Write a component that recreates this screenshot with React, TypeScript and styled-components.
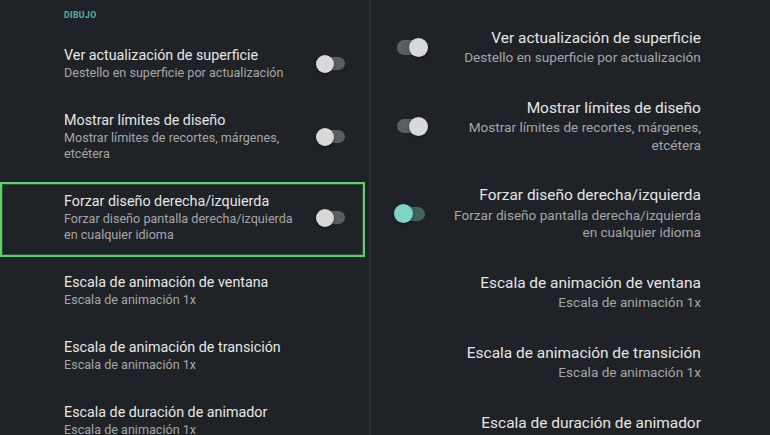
import styled, { createGlobalStyle, css } from "styled-components";

// every size of a list scales with its --k
const u = (px: number) => `calc(${px}px * var(--k))`;

const GlobalStyle = createGlobalStyle`
  html, body {
    margin: 0;
    background: #1f2226;
  }
  body {
    font-family: Roboto, "Noto Sans", "Liberation Sans", sans-serif;
    -webkit-font-smoothing: antialiased;
  }
`;

const Screen = styled.div`
  display: flex;
  width: 770px;
  height: 435px;
  overflow: hidden;
  background: #1f2226;
`;

const Panel = styled.section<{ $rtl?: boolean; $scale: number }>`
  --k: ${(p) => p.$scale};
  display: flex;
  flex-direction: column;
  width: ${(p) => (p.$rtl ? "auto" : "369px")};
  flex: ${(p) => (p.$rtl ? 1 : "none")};
  text-align: ${(p) => (p.$rtl ? "right" : "left")};
  overflow: hidden;
`;

const Divider = styled.div`
  width: 2px;
  flex: none;
  background: #292c30;
`;

const SectionLabel = styled.div<{ $rtl?: boolean }>`
  height: ${u(30)};
  line-height: ${u(30)};
  padding: 0 ${u(64)};
  margin-top: ${(p) => (p.$rtl ? u(-19.5) : "0")};
  color: #5cb3a4;
  font-size: ${u(8.6)};
  font-weight: 700;
  letter-spacing: 0.05em;
`;

const Row = styled.div<{ $rtl?: boolean; $highlight?: boolean }>`
  display: flex;
  flex-direction: ${(p) => (p.$rtl ? "row-reverse" : "row")};
  align-items: center;
  gap: ${u(12)};
  padding: ${u(16)} ${u(17)} ${u(14)} ${u(64)};
  margin-right: ${u(4)};

  ${(p) =>
    p.$rtl &&
    css`
      padding: ${u(16)} ${u(64)} ${u(14)} ${u(17)};
      margin-right: 0;
      margin-left: ${u(4)};
    `}

  ${(p) =>
    p.$highlight &&
    css`
      margin-top: ${u(6)};
      border: 2px solid #5ed06b;
      box-shadow: inset 0 0 0 1px rgba(120, 230, 130, 0.2);
      padding: ${u(8)} calc(${u(17)} - 2px) ${u(12)} calc(${u(64)} - 2px);
    `}
`;

const Texts = styled.div`
  flex: 1;
  min-width: 0;
`;

const Title = styled.div`
  color: #e6e6e6;
  font-size: ${u(14.3)};
  line-height: ${u(18)};
`;

const Summary = styled.div`
  margin-top: ${u(1)};
  color: #a5a6a8;
  font-size: ${u(12.6)};
  line-height: ${u(16)};
`;

// track 26 wide, thumb overhangs it by 3 at either end
const Switch = styled.div<{ $on?: boolean; $rtl?: boolean }>`
  position: relative;
  flex: none;
  width: ${u(32)};
  height: ${u(18)};

  &::before {
    content: "";
    position: absolute;
    top: ${u(2.5)};
    left: ${u(3)};
    width: ${u(26)};
    height: ${u(13)};
    border-radius: ${u(6.5)};
    background: ${(p) => (p.$on ? "#44615c" : "#5c5f62")};
  }

  &::after {
    content: "";
    position: absolute;
    top: 0;
    ${(p) => {
      const thumbAtRight = p.$rtl ? !p.$on : p.$on;
      return thumbAtRight ? "right: 0;" : "left: 0;";
    }}
    width: ${u(18)};
    height: ${u(18)};
    border-radius: 50%;
    background: ${(p) => (p.$on ? "#7dd6c3" : "#d8d8d8")};
    box-shadow: 0 1px 3px rgba(0, 0, 0, 0.45);
  }
`;

type Item = {
  title: string;
  summary: string;
  toggle?: boolean;
  highlight?: boolean;
};

const items: Item[] = [
  {
    title: "Ver actualización de superficie",
    summary: "Destello en superficie por actualización",
    toggle: true,
  },
  {
    title: "Mostrar límites de diseño",
    summary: "Mostrar límites de recortes, márgenes, etcétera",
    toggle: true,
  },
  {
    title: "Forzar diseño derecha/izquierda",
    summary: "Forzar diseño pantalla derecha/izquierda en cualquier idioma",
    toggle: true,
    highlight: true,
  },
  { title: "Escala de animación de ventana", summary: "Escala de animación 1x" },
  { title: "Escala de animación de transición", summary: "Escala de animación 1x" },
  { title: "Escala de duración de animador", summary: "Escala de animación 1x" },
];

function SettingsList({ rtl, scale }: { rtl?: boolean; scale: number }) {
  return (
    <Panel $rtl={rtl} $scale={scale}>
      <SectionLabel $rtl={rtl}>DIBUJO</SectionLabel>
      {items.map((item) => (
        <Row key={item.title} $rtl={rtl} $highlight={!rtl && item.highlight}>
          <Texts>
            <Title>{item.title}</Title>
            <Summary>{item.summary}</Summary>
          </Texts>
          {item.toggle && <Switch $rtl={rtl} $on={rtl && item.highlight} />}
        </Row>
      ))}
    </Panel>
  );
}

export default function App() {
  return (
    <>
      <GlobalStyle />
      <Screen>
        <SettingsList scale={1} />
        <Divider />
        <SettingsList rtl scale={1.08} />
      </Screen>
    </>
  );
}
